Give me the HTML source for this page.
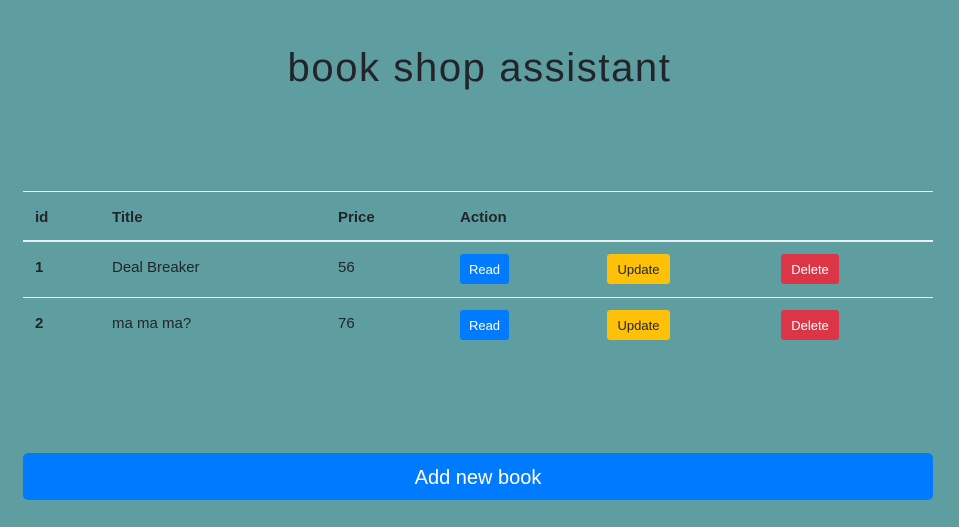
<!DOCTYPE html>
<html><head><style>
body{margin:0;width:959px;height:527px;background:#5f9ea0;font-family:"Liberation Sans",sans-serif;color:#212529;position:relative;overflow:hidden}
.a{position:absolute}
h1{position:absolute;top:42px;left:0;width:959px;text-align:center;margin:0;font-weight:400;font-size:40px;letter-spacing:1.6px;line-height:52px}
.line{position:absolute;left:23px;width:910px;background:#e8f2f2;height:1px}
.th{font-weight:bold;font-size:15px}
.td{font-size:15px}
.btn{position:absolute;height:30px;line-height:32px;border-radius:3px;font-size:13px;text-align:center}
.r{background:#007bff;color:#fff;left:460px;width:49px}
.u{background:#ffc107;color:#212529;left:607px;width:63px}
.d{background:#dc3545;color:#fff;left:781px;width:58px}
</style></head><body>
<h1>book shop assistant</h1>
<div class="line" style="top:191px"></div>
<div class="line" style="top:240px;height:2px"></div>
<div class="line" style="top:297px"></div>
<div class="a th" style="left:35px;top:209px">id</div>
<div class="a th" style="left:112px;top:209px">Title</div>
<div class="a th" style="left:338px;top:209px">Price</div>
<div class="a th" style="left:460px;top:209px">Action</div>
<div class="a th" style="left:35px;top:259px">1</div>
<div class="a td" style="left:112px;top:259px">Deal Breaker</div>
<div class="a td" style="left:338px;top:259px">56</div>
<div class="btn r" style="top:254px">Read</div>
<div class="btn u" style="top:254px">Update</div>
<div class="btn d" style="top:254px">Delete</div>
<div class="a th" style="left:35px;top:315px">2</div>
<div class="a td" style="left:112px;top:315px">ma ma ma?</div>
<div class="a td" style="left:338px;top:315px">76</div>
<div class="btn r" style="top:310px">Read</div>
<div class="btn u" style="top:310px">Update</div>
<div class="btn d" style="top:310px">Delete</div>
<div class="a" style="left:23px;top:453px;width:910px;height:47px;line-height:51px;background:#007bff;color:#fff;border-radius:5px;text-align:center;font-size:20px">Add new book</div>
</body></html>
